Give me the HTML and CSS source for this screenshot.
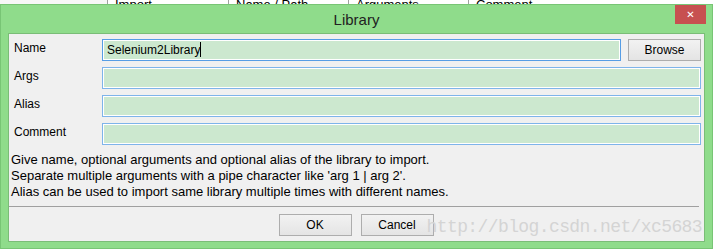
FILE: index.html
```html
<!DOCTYPE html>
<html lang="en">
<head>
    <meta charset="UTF-8">
    <title>Library</title>
    <link rel="stylesheet" href="styles.css">
</head>
<body>
    <div class="backdrop">
        <div class="col col-first"></div>
        <div class="col"><span>Import</span></div>
        <div class="col"><span>Name / Path</span></div>
        <div class="col"><span>Arguments</span></div>
        <div class="col"><span>Comment</span></div>
    </div>

    <div class="dialog">
        <div class="titlebar">
            <span></span>
            <div class="title">Library</div>
            <button class="close">&#x2715;</button>
        </div>

        <div class="client">
            <div class="form">
                <label>Name</label>
                <div class="field-row">
                    <div class="field focused">Selenium2Library<span class="caret"></span></div>
                    <button class="btn browse">Browse</button>
                </div>

                <label>Args</label>
                <div class="field"></div>

                <label>Alias</label>
                <div class="field"></div>

                <label>Comment</label>
                <div class="field"></div>
            </div>

            <div class="help">
                <p>Give name, optional arguments and optional alias of the library to import.</p>
                <p>Separate multiple arguments with a pipe character like 'arg 1 | arg 2'.</p>
                <p>Alias can be used to import same library multiple times with different names.</p>
            </div>

            <div class="sep"></div>

            <div class="actions">
                <button class="btn">OK</button>
                <button class="btn">Cancel</button>
            </div>

            <div class="watermark">http://blog.csdn.net/xc5683</div>
        </div>
    </div>
</body>
</html>
```

FILE: styles.css
```css
body {
    margin: 0;
    width: 713px;
    height: 250px;
    background-color: #fff;
    font-family: "Liberation Sans", Arial, sans-serif;
    font-size: 12px;
    color: #000;
    overflow: hidden;
}

/* the grid header peeking out above the dialog */
.backdrop {
    display: grid;
    grid-template-columns: 107px 121px 120px 120px 1fr;
    height: 4px;
    overflow: hidden;
}
.backdrop .col {
    border-left: 1px solid #a0a0a0;
    padding-left: 7px;
}
.backdrop .col-first {
    border-left: none;
    background-color: #f7f7f7;
}
.backdrop span {
    display: block;
    margin-top: -3px;
    font-size: 13px;
    line-height: 15px;
}

.dialog {
    border: 1px solid #78c575;
    background-color: #8fdc8b;
    padding: 0 7px 6px 7px;
}

.titlebar {
    display: grid;
    grid-template-columns: 1fr auto 1fr;
    height: 28px;
}
.title {
    font-size: 15px;
    color: #222;
    line-height: 28px;
    padding-top: 1px;
}
.close {
    justify-self: end;
    align-self: start;
    width: 31px;
    height: 19px;
    margin-right: -1px;
    border: none;
    padding: 0;
    background-color: #c75050;
    color: #fff;
    font-size: 10px;
    font-weight: bold;
    font-family: "DejaVu Sans", sans-serif;
    line-height: 19px;
}

.client {
    position: relative;
    border: 1px solid #7abd77;
    background-color: #f0f0f0;
    padding: 5px 3px 5px 2px;
}

.form {
    display: grid;
    grid-template-columns: 91px 1fr;
    grid-auto-rows: 22px;
    row-gap: 6px;
}
.form label {
    padding-left: 3px;
    line-height: 18px;
}

.field-row {
    display: flex;
    gap: 7px;
}
.field {
    flex-grow: 1;
    border: 1px solid #7eb4ea;
    box-shadow: inset 0 0 0 1px #fff;
    background-color: #cce8cf;
    padding-left: 4px;
    line-height: 20px;
}
.field.focused {
    border-color: #569de5;
}
.caret {
    display: inline-block;
    width: 1px;
    height: 15px;
    background-color: #000;
    vertical-align: -3px;
}

.btn {
    font-family: inherit;
    font-size: 12px;
    color: #000;
    border: 1px solid #adadad;
    background: linear-gradient(#f2f2f2, #e4e4e4);
    padding: 0;
    height: 22px;
}
.browse {
    width: 73px;
}

.help {
    margin-top: 7px;
    font-size: 13px;
}
.help p {
    margin: 0;
    line-height: 16px;
}

.sep {
    margin: 6px 2px 0 -2px;
    border-top: 1px solid #a0a0a0;
}

.actions {
    display: flex;
    justify-content: center;
    gap: 9px;
    margin-top: 7px;
}
.actions .btn {
    width: 73px;
}

/* blog watermark stamped over the corner */
.watermark {
    position: absolute;
    right: 2px;
    bottom: 4px;
    font-family: "Liberation Mono", monospace;
    font-size: 18px;
    letter-spacing: -0.6px;
    color: #d4d4d4;
}
```
